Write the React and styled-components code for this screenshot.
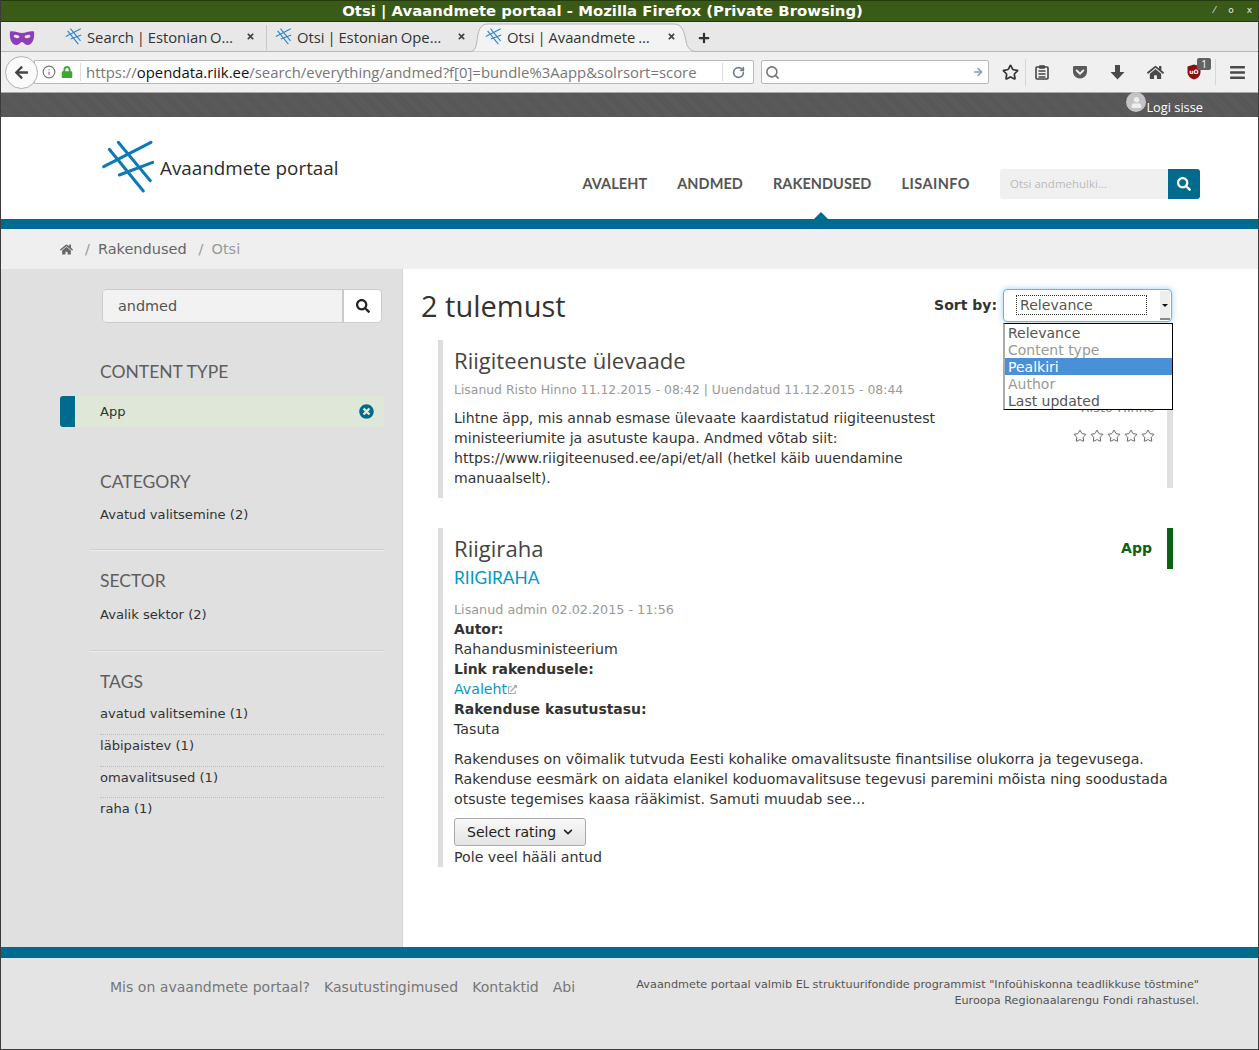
import styled, { createGlobalStyle } from 'styled-components';
import { FaHome, FaSearch, FaTimesCircle, FaLock, FaArrowLeft, FaBars, FaGetPocket, FaTimes, FaPlus, FaChevronDown, FaUser, FaExternalLinkAlt } from 'react-icons/fa';
import { Info, RotateCw, Star, ArrowRight, Search } from 'lucide-react';

const GlobalStyle = createGlobalStyle`
	html, body {
		margin: 0;
		padding: 0;
		background: #fff;
	}
	body {
		font-family: "DejaVu Sans", sans-serif;
		font-size: 14.1px;
		line-height: 20px;
		color: #333;
	}
	* {
		box-sizing: border-box;
	}
`;

const Window = styled.div`
	width: 1259px;
	height: 1050px;
	display: flex;
	flex-direction: column;
	overflow: hidden;
	border-left: 1px solid #3c3c3c;
	border-right: 1px solid #3c3c3c;
	border-bottom: 1px solid #3c3c3c;
`;

const TitleBar = styled.div`
	height: 22px;
	flex: none;
	margin: 0 -1px;
	padding-right: 54px;
	background: #3a5a17;
	border: 1px solid #233a0a;
	color: #fff;
	font-weight: bold;
	font-size: 14.85px;
	line-height: 19px;
	display: flex;
	align-items: center;
	justify-content: center;
	position: relative;
`;

const WindowButtons = styled.div`
	position: absolute;
	right: 6px;
	top: 0;
	display: flex;
	gap: 13px;
	font-size: 9px;
	font-weight: normal;
	color: #e6e6e6;
`;

const TabBar = styled.div`
	height: 30px;
	flex: none;
	background: #e8e8e8;
	border-bottom: 1px solid #b5b5b5;
	display: flex;
	align-items: center;
	font-family: "Open Sans", sans-serif;
	font-size: 14.8px;
	word-spacing: -1px;
	color: #333;
	padding: 2px 0 0 8px;
`;

const Tab = styled.div`
	width: 210px;
	height: 25px;
	display: flex;
	align-items: center;
	padding: 0 8px 2px;
	gap: 5px;
	position: relative;
	border-right: ${(p) => (p.$divider ? '1px solid #c8c8c8' : 'none')};
	> span,
	> svg {
		position: relative;
		z-index: 1;
	}
`;

const TabShape = styled.svg`
	position: absolute !important;
	z-index: 0 !important;
	left: -8px;
	top: -2px;
`;

const TabTitle = styled.span`
	flex: 1;
	white-space: nowrap;
	overflow: hidden;
`;

const TabClose = styled(FaTimes)`
	font-size: 9px;
	color: #444;
	margin-right: 3px;
`;

const NewTab = styled(FaPlus)`
	font-size: 12px;
	color: #333;
	margin-left: 11px;
	position: relative;
`;

const NavBar = styled.div`
	height: 41px;
	flex: none;
	background: #f0f0f0;
	border-bottom: 1px solid #a9a9a9;
	display: flex;
	align-items: center;
	padding-left: 4px;
`;

const BackButton = styled.div`
	width: 33px;
	height: 33px;
	flex: none;
	border-radius: 50%;
	background: #fafafa;
	border: 1px solid #b0b0b0;
	display: flex;
	align-items: center;
	justify-content: center;
	color: #444;
	font-size: 15px;
	position: relative;
	z-index: 1;
`;

const UrlBox = styled.div`
	width: 720px;
	height: 24px;
	margin-left: -4px;
	background: #fff;
	border: 1px solid #b9b9b9;
	border-radius: 0 2px 2px 0;
	display: flex;
	align-items: center;
	padding-left: 7px;
	font-family: "Open Sans", sans-serif;
	font-size: 14.9px;
	color: #777;
	white-space: nowrap;
`;

const UrlDivider = styled.span`
	width: 1px;
	height: 18px;
	background: #ddd;
	margin: 0 5px 0 7px;
	flex: none;
`;

const UrlText = styled.span`
	flex: 1;
	overflow: hidden;
	b {
		font-weight: normal;
		color: #111;
	}
`;

const SearchBox = styled.div`
	width: 228px;
	height: 24px;
	margin-left: 7px;
	background: #fff;
	border: 1px solid #b9b9b9;
	border-radius: 2px;
	display: flex;
	align-items: center;
	justify-content: space-between;
	padding: 0 4px 0 3px;
	color: #777;
`;

const ToolIcons = styled.div`
	flex: 1;
	display: flex;
	align-items: center;
	color: #4a4a4a;
	font-size: 16px;
	padding-left: 13px;
`;

const ToolIcon = styled.span`
	width: ${(p) => p.$w}px;
	flex: none;
	display: flex;
	align-items: center;
	position: relative;
	${(p) =>
		p.$dividerRight
			? `&::after {
		content: '';
		position: absolute;
		right: ${p.$dividerRight}px;
		top: -5px;
		bottom: -5px;
		width: 1px;
		background: #d6d6d6;
	}`
			: ''}
`;

const Badge = styled.span`
	position: absolute;
	left: 10px;
	top: -6px;
	width: 14px;
	height: 12px;
	background: #5f6368;
	border-radius: 2px;
	color: #fff;
	font-family: "Open Sans", sans-serif;
	font-size: 10px;
	line-height: 12px;
	text-align: center;
`;

const TopStrip = styled.div`
	height: 24px;
	flex: none;
	background-color: #5a5a5a;
	background-image: repeating-linear-gradient(45deg, #555 0 1px, #5c5c5c 1px 2px);
	display: flex;
	justify-content: flex-end;
	padding-right: 55px;
	color: #fff;
	font-size: 12.8px;
	font-family: "Open Sans", sans-serif;
`;

const Login = styled.div`
	display: flex;
	align-items: flex-end;
	line-height: 17px;
	height: 24px;
	padding-bottom: 1px;
`;

const Avatar = styled.span`
	width: 20px;
	height: 20px;
	border-radius: 50%;
	background: #c4c4c4;
	color: #eee;
	display: flex;
	align-items: center;
	justify-content: center;
	font-size: 11px;
	margin-bottom: 4px;
`;

const Header = styled.header`
	height: 102px;
	flex: none;
	background: #fff;
	display: flex;
	padding: 23px 58px 0 100px;
`;

const Logo = styled.div`
	display: flex;
	align-items: center;
	height: 54px;
	gap: 5px;
	font-family: "Open Sans", sans-serif;
	font-size: 18.85px;
	color: #2b2b2b;
`;

const LogoText = styled.span`
	margin-top: 2px;
`;

const MainNav = styled.nav`
	margin-left: auto;
	display: flex;
	align-items: flex-start;
	padding-top: 34px;
	gap: 30px;
	font-family: "Lato", sans-serif;
	font-weight: bold;
	font-size: 14.5px;
	letter-spacing: 0.06px;
	color: #555;
`;

const NavItem = styled.a`
	line-height: 20px;
	position: relative;
	letter-spacing: ${(p) => p.$spacing || 0.06}px;
`;

const ActiveCaret = styled.span`
	position: absolute;
	left: 50%;
	margin-left: -8px;
	top: 38px;
	border-left: 7px solid transparent;
	border-right: 7px solid transparent;
	border-bottom: 7px solid #006b8f;
`;

const HeaderSearch = styled.div`
	margin-left: 30px;
	margin-top: 29px;
	display: flex;
	height: 30px;
`;

const HeaderInput = styled.div`
	width: 168px;
	background: #f0f0f0;
	border-radius: 3px 0 0 3px;
	color: #bbb;
	font-size: 11.5px;
	line-height: 30px;
	padding-left: 10px;
	font-family: "Open Sans", sans-serif;
`;

const HeaderButton = styled.div`
	width: 32px;
	background: #006b8f;
	color: #fff;
	border-radius: 0 3px 3px 0;
	display: flex;
	align-items: center;
	justify-content: center;
	font-size: 14px;
`;

const TealBar = styled.div`
	height: ${(p) => p.$h}px;
	flex: none;
	background: #006b8f;
`;

const Breadcrumb = styled.div`
	height: 40px;
	flex: none;
	background: #efefef;
	display: flex;
	align-items: center;
	padding-left: 59px;
	color: #666;
	font-size: 14.5px;
`;

const Crumb = styled.span`
	color: ${(p) => (p.$muted ? '#999' : '#666')};
	margin-left: ${(p) => p.$ml || 0}px;
`;

const Body = styled.div`
	flex: 1;
	display: grid;
	grid-template-columns: 402px 1fr;
	position: relative;
`;

const Sidebar = styled.aside`
	background: #e0e0e0;
	border-right: 1px solid #d4d4d4;
	padding: 20px 0 0 59px;
	font-size: 13.1px;
`;

const SideSearch = styled.div`
	display: flex;
	width: 280px;
	height: 34px;
	margin-left: 42px;
	border: 1px solid #ccc;
	border-radius: 5px;
	overflow: hidden;
`;

const SideInput = styled.div`
	flex: 1;
	background: #f2f2f2;
	line-height: 32px;
	padding-left: 15px;
	font-size: 14.4px;
	color: #555;
`;

const SideButton = styled.div`
	width: 39px;
	background: #fff;
	border-left: 2px solid #ccc;
	display: flex;
	align-items: center;
	justify-content: center;
	font-size: 14px;
	color: #222;
`;

const FacetTitle = styled.h3`
	margin: ${(p) => p.$mt}px 0 0 40px;
	font-family: "Lato", sans-serif;
	font-size: 17.5px;
	line-height: 20px;
	font-weight: normal;
	color: #5e5e5e;
`;

const ActiveFacet = styled.div`
	margin-top: 14px;
	width: 324px;
	height: 31px;
	display: flex;
	align-items: center;
	background: #dfe8d8;
	border-left: 15px solid #006b8f;
	border-radius: 3px 0 0 3px;
	padding: 0 10px 0 25px;
	justify-content: space-between;
	color: #333;
`;

const RemoveIcon = styled(FaTimesCircle)`
	color: #006b8f;
	font-size: 15px;
`;

const FacetList = styled.ul`
	list-style: none;
	margin: ${(p) => p.$mt || 12}px 0 0 40px;
	padding: 0;
	width: 284px;
`;

const FacetItem = styled.li`
	height: ${(p) => p.$h || 32}px;
	line-height: 20px;
	padding-top: 1px;
	border-bottom: ${(p) => (p.$line ? '1px dotted #bdbdbd' : 'none')};
`;

const FacetDivider = styled.div`
	width: 294px;
	height: 2px;
	margin: ${(p) => p.$mt}px 0 0 30px;
	background: #d0d0d0;
	border-bottom: 1px solid #ececec;
`;

const Content = styled.main`
	background: #fff;
	padding: 16px 86px 0 18px;
	position: relative;
`;

const ContentHead = styled.div`
	display: flex;
	align-items: flex-start;
	height: 55px;
`;

const ResultCount = styled.h1`
	margin: 0;
	font-family: "Open Sans", sans-serif;
	font-weight: normal;
	font-size: 29px;
	line-height: 41px;
	color: #333;
`;

const SortLabel = styled.b`
	margin-left: auto;
	margin-top: 10px;
	font-size: 14px;
`;

const SortSelect = styled.div`
	position: relative;
	width: 169px;
	height: 33px;
	margin: 4px 0 0 6px;
	background: #fff;
	border: 1px solid #66afe9;
	border-radius: 4px;
	box-shadow: 0 0 6px rgba(102, 175, 233, 0.6);
	padding: 5px 12px;
`;

const SortValue = styled.div`
	width: 131px;
	height: 20px;
	border: 1px dotted #333;
	line-height: 18px;
	padding-left: 3px;
	color: #555;
`;

const SortArrow = styled.span`
	position: absolute;
	right: 1px;
	top: 1px;
	bottom: 1px;
	width: 10px;
	background: #eee;
	border-bottom: 2px solid #888;
	&::after {
		content: '';
		position: absolute;
		left: 2px;
		top: 13px;
		border-left: 3px solid transparent;
		border-right: 3px solid transparent;
		border-top: 3px solid #111;
	}
`;

const SortMenu = styled.ul`
	position: absolute;
	left: -1px;
	top: 33px;
	width: 170px;
	margin: 0;
	padding: 0;
	list-style: none;
	background: #fff;
	border: 1px solid #000;
	border-left: 2px solid #aaa;
	z-index: 5;
	font-size: 14px;
	line-height: 18px;
`;

const SortOption = styled.li`
	height: 17px;
	padding-left: 3px;
	color: ${(p) => (p.$selected ? '#fff' : p.$muted ? '#999' : '#555')};
	background: ${(p) => (p.$selected ? '#4a90d9' : 'transparent')};
`;

const Result = styled.article`
	margin: ${(p) => p.$mt || 0}px -1px 0 17px;
	border-left: 5px solid #ddd;
	padding-left: 11px;
	display: flex;
	height: ${(p) => p.$h}px;
	position: relative;
	font-size: ${(p) => p.$size || 14.1}px;
`;

const ResultMain = styled.div`
	flex: 1;
	min-width: 0;
`;

const ResultTitle = styled.h2`
	margin: 0;
	padding-top: 6px;
	font-family: "Open Sans", sans-serif;
	font-weight: normal;
	font-size: 22.1px;
	line-height: 28px;
	color: #444;
`;

const ResultSub = styled.a`
	display: block;
	font-family: "Lato", sans-serif;
	font-size: 17.3px;
	line-height: 24px;
	color: #0099c6;
	margin-top: 4px;
`;

const Meta = styled.div`
	color: #999;
	font-size: ${(p) => p.$size}px;
	line-height: 20px;
	margin-top: ${(p) => p.$mt}px;
	margin-bottom: ${(p) => p.$mb || 0}px;
`;

const Paragraph = styled.p`
	margin: ${(p) => p.$mt || 0}px 0 0;
	width: ${(p) => p.$w || 'auto'};
`;

const FieldLabel = styled.b`
	font-size: 13.95px;
`;

const LinkText = styled.a`
	color: #0099c6;
	display: inline-flex;
	align-items: center;
	gap: 1px;
`;

const RatingButton = styled.button`
	display: flex;
	align-items: center;
	gap: 7px;
	margin: 9px 0 1px;
	height: 28px;
	padding: 0 12px;
	border: 1px solid #aaa;
	border-radius: 3px;
	background: linear-gradient(#f8f8f8, #e4e4e4);
	font-family: "DejaVu Sans", sans-serif;
	font-size: 14px;
	color: #222;
`;

const ResultAside = styled.div`
	width: 160px;
	flex: none;
	height: 148px;
	border-right: 6px solid #e0e0e0;
	display: flex;
	flex-direction: column;
	align-items: flex-end;
	padding-right: 12px;
`;

const TypeFlag = styled.div`
	position: absolute;
	right: 0;
	top: 0;
	height: 41px;
	border-right: 6px solid #0b6212;
	padding-right: 15px;
`;

const AppTag = styled.b`
	display: block;
	color: #0b6212;
	font-size: 14px;
	margin-top: 10px;
`;

const AuthorName = styled.span`
	color: #888;
	font-size: 13px;
	margin-top: 28px;
`;

const Stars = styled.div`
	display: flex;
	gap: 3px;
	margin-top: 11px;
	color: #444;
`;

const Footer = styled.footer`
	flex: none;
	height: 91px;
	background: #e4e4e4;
	display: flex;
	justify-content: space-between;
	padding: 19px 59px 0 109px;
`;

const FooterLinks = styled.div`
	display: flex;
	gap: 14px;
	color: #777;
	font-size: 14.05px;
	line-height: 20px;
`;

const FooterNote = styled.div`
	text-align: right;
	font-size: 11.24px;
	line-height: 16px;
	color: #555;
`;

const TabLogo = () => (
	<svg width="17" height="17" viewBox="0 0 54 54" fill="none" stroke="#2f88c8" strokeWidth="3.6" style={{ flex: 'none' }}>
		<path d="M2.7 26.7 50 2.3M18.3 35l33.4-12.7M8.3 9.3l34 41.7M17.3 2.3l32 38.4" />
	</svg>
);

const sortOptions = ['Relevance', 'Content type', 'Pealkiri', 'Author', 'Last updated'];

export default function App() {
	return (
		<>
			<GlobalStyle />
			<Window>
				<TitleBar>
					Otsi | Avaandmete portaal - Mozilla Firefox (Private Browsing)
					<WindowButtons>
						<span>⁄</span>
						<span>o</span>
						<span>x</span>
					</WindowButtons>
				</TitleBar>
				<TabBar>
					<svg width="26" height="16" viewBox="0 0 26 16" style={{ marginRight: 22, flex: 'none' }}>
						<path d="M1 1.5c4-1 8 1.500 12 1.500s8-2.500 12-1.500c.8 6-1 13.500-6.500 13.500-3 0-3.500-3-5.500-3s-2.500 3-5.500 3C2 15 .2 7.500 1 1.500z" fill="#8d3db6" />
						<ellipse cx="7.500" cy="6.500" rx="3" ry="1.600" fill="#e8e8e8" transform="rotate(12 7.500 6.500)" />
						<ellipse cx="18.500" cy="6.500" rx="3" ry="1.600" fill="#e8e8e8" transform="rotate(-12 18.500 6.500)" />
					</svg>
					<Tab $divider>
						<TabLogo />
						<TabTitle>Search | Estonian O…</TabTitle>
						<TabClose />
					</Tab>
					<Tab>
						<TabLogo />
						<TabTitle>Otsi | Estonian Ope…</TabTitle>
						<TabClose />
					</Tab>
					<Tab>
						<TabShape width="228" height="29" viewBox="0 0 228 29">
							<path d="M1 28.500C6 28.500 7 24 8 18 9 8 11 1 19 1L205 1C213 1 215 8 217 18 218 25 222 28.500 227 28.500" fill="#f3f3f3" stroke="#b5b5b5" />
						</TabShape>
						<TabLogo />
						<TabTitle>Otsi | Avaandmete …</TabTitle>
						<TabClose />
					</Tab>
					<NewTab />
				</TabBar>
				<NavBar>
					<BackButton>
						<FaArrowLeft />
					</BackButton>
					<UrlBox>
						<Info size={14} color="#777" style={{ marginRight: 5, flex: 'none' }} />
						<FaLock size={12} color="#3fa535" style={{ flex: 'none' }} />
						<UrlDivider />
						<UrlText>
							https://<b>opendata.riik.ee</b>/search/everything/andmed?f[0]=bundle%3Aapp&solrsort=score
						</UrlText>
						<UrlDivider />
						<RotateCw size={13} color="#6d7f8f" strokeWidth={3} style={{ margin: '0 8px 0 4px', flex: 'none' }} />
					</UrlBox>
					<SearchBox>
						<Search size={15} strokeWidth={2.5} />
						<ArrowRight size={12} color="#8a9aa8" strokeWidth={3} />
					</SearchBox>
					<ToolIcons>
						<ToolIcon $w={33} $dividerRight={9}>
							<Star size={17} strokeWidth={2.4} color="#333" />
						</ToolIcon>
						<ToolIcon $w={37}>
							<svg width="14" height="16" viewBox="0 0 14 16" fill="none" stroke="#444" strokeWidth="1.600">
								<rect x="1" y="3" width="12" height="12" rx="1" />
								<path d="M5 2h4v2H5zM3.500 7h7M3.500 10h7M3.500 13h7" />
							</svg>
						</ToolIcon>
						<ToolIcon $w={38}>
							<FaGetPocket size={16} color="#5a5a5a" />
						</ToolIcon>
						<ToolIcon $w={37}>
							<svg width="15" height="16" viewBox="0 0 15 16" fill="#4a4a4a">
								<path d="M5 1h5v7h4.500L7.500 15.500.5 8H5z" />
							</svg>
						</ToolIcon>
						<ToolIcon $w={40}>
							<FaHome size={17} />
						</ToolIcon>
						<ToolIcon $w={42} $dividerRight={13}>
							<svg width="14" height="16" viewBox="0 0 14 16">
								<path d="M7 .5l6.500 2v5.500c0 4-3 6.500-6.500 7.500C3.500 14.500.5 12 .5 8V2.500z" fill="#8a0f0f" />
								<text x="7" y="10" textAnchor="middle" fontSize="6" fontWeight="bold" fill="#fff" fontFamily="DejaVu Sans">uO</text>
							</svg>
							<Badge>1</Badge>
						</ToolIcon>
						<ToolIcon $w={20}>
							<FaBars size={17} />
						</ToolIcon>
					</ToolIcons>
				</NavBar>
				<TopStrip>
					<Login>
						<Avatar>
							<FaUser />
						</Avatar>
						Logi sisse
					</Login>
				</TopStrip>
				<Header>
					<Logo>
						<svg width="54" height="54" viewBox="0 0 54 54" fill="none" stroke="#0b7ab5" strokeWidth="3" strokeLinecap="round">
							<path d="M2.700 26.700 50 2.300M18.300 35l33.400-12.700M8.300 9.300l34 41.700M17.300 2.300l32 38.400" />
						</svg>
						<LogoText>Avaandmete portaal</LogoText>
					</Logo>
					<MainNav>
						<NavItem>AVALEHT</NavItem>
						<NavItem>ANDMED</NavItem>
						<NavItem>
							RAKENDUSED
							<ActiveCaret />
						</NavItem>
						<NavItem $spacing={0.45}>LISAINFO</NavItem>
					</MainNav>
					<HeaderSearch>
						<HeaderInput>Otsi andmehulki...</HeaderInput>
						<HeaderButton>
							<FaSearch />
						</HeaderButton>
					</HeaderSearch>
				</Header>
				<TealBar $h={10} />
				<Breadcrumb>
					<FaHome size={13} />
					<Crumb $ml={12} $muted>/</Crumb>
					<Crumb $ml={8}>Rakendused</Crumb>
					<Crumb $ml={12} $muted>/</Crumb>
					<Crumb $ml={8} $muted>Otsi</Crumb>
				</Breadcrumb>
				<Body>
					<Sidebar>
						<SideSearch>
							<SideInput>andmed</SideInput>
							<SideButton>
								<FaSearch />
							</SideButton>
						</SideSearch>
						<FacetTitle $mt={39}>CONTENT TYPE</FacetTitle>
						<ActiveFacet>
							App
							<RemoveIcon />
						</ActiveFacet>
						<FacetTitle $mt={45}>CATEGORY</FacetTitle>
						<FacetList>
							<FacetItem $h={24}>Avatud valitsemine (2)</FacetItem>
						</FacetList>
						<FacetDivider $mt={21} />
						<FacetTitle $mt={20}>SECTOR</FacetTitle>
						<FacetList $mt={13}>
							<FacetItem $h={24}>Avalik sektor (2)</FacetItem>
						</FacetList>
						<FacetDivider $mt={22} />
						<FacetTitle $mt={20}>TAGS</FacetTitle>
						<FacetList $mt={11}>
							<FacetItem $line>avatud valitsemine (1)</FacetItem>
							<FacetItem $line>läbipaistev (1)</FacetItem>
							<FacetItem $line $h={31}>omavalitsused (1)</FacetItem>
							<FacetItem>raha (1)</FacetItem>
						</FacetList>
					</Sidebar>
					<Content>
						<ContentHead>
							<ResultCount>2 tulemust</ResultCount>
							<SortLabel>Sort by:</SortLabel>
							<SortSelect>
								<SortValue>Relevance</SortValue>
								<SortArrow />
								<SortMenu>
									{sortOptions.map((r) => (
										<SortOption key={r} $selected={r === 'Pealkiri'} $muted={r === 'Content type' || r === 'Author'}>
											{r}
										</SortOption>
									))}
								</SortMenu>
							</SortSelect>
						</ContentHead>
						<Result $h={158}>
							<ResultMain>
								<ResultTitle>Riigiteenuste ülevaade</ResultTitle>
								<Meta $mt={6} $size={12.4}>Lisanud Risto Hinno 11.12.2015 - 08:42 | Uuendatud 11.12.2015 - 08:44</Meta>
								<Paragraph $mt={8} $w="490px">
									Lihtne äpp, mis annab esmase ülevaate kaardistatud riigiteenustest ministeeriumite ja asutuste kaupa. Andmed võtab siit: https://www.riigiteenused.ee/api/et/all (hetkel käib uuendamine manuaalselt).
								</Paragraph>
							</ResultMain>
							<ResultAside>
								<AppTag>App</AppTag>
								<AuthorName>Risto Hinno</AuthorName>
								<Stars>
									{[0, 1, 2, 3, 4].map((i) => (
										<Star key={i} size={14} strokeWidth={1.4} />
									))}
								</Stars>
							</ResultAside>
						</Result>
						<Result $mt={30} $h={339} $size={14.18}>
							<ResultMain>
								<ResultTitle>Riigiraha</ResultTitle>
								<ResultSub>RIIGIRAHA</ResultSub>
								<Meta $mt={10} $mb={-1} $size={12.75}>Lisanud admin 02.02.2015 - 11:56</Meta>
								<FieldLabel>Autor:</FieldLabel>
								<div>Rahandusministeerium</div>
								<FieldLabel>Link rakendusele:</FieldLabel>
								<div>
									<LinkText>
										Avaleht
										<FaExternalLinkAlt size={9} color="#aaa" />
									</LinkText>
								</div>
								<FieldLabel>Rakenduse kasutustasu:</FieldLabel>
								<div>Tasuta</div>
								<Paragraph $mt={10}>
									Rakenduses on võimalik tutvuda Eesti kohalike omavalitsuste finantsilise olukorra ja tegevusega. Rakenduse eesmärk on aidata elanikel koduomavalitsuse tegevusi paremini mõista ning soodustada otsuste tegemises kaasa rääkimist. Samuti muudab see...
								</Paragraph>
								<RatingButton>
									Select rating
									<FaChevronDown size={10} />
								</RatingButton>
								<div>Pole veel hääli antud</div>
							</ResultMain>
							<TypeFlag>
								<AppTag>App</AppTag>
							</TypeFlag>
						</Result>
					</Content>
				</Body>
				<TealBar $h={11} />
				<Footer>
					<FooterLinks>
						<span>Mis on avaandmete portaal?</span>
						<span>Kasutustingimused</span>
						<span>Kontaktid</span>
						<span>Abi</span>
					</FooterLinks>
					<FooterNote>
						Avaandmete portaal valmib EL struktuurifondide programmist "Infoühiskonna teadlikkuse tõstmine"
						<br />
						Euroopa Regionaalarengu Fondi rahastusel.
					</FooterNote>
				</Footer>
			</Window>
		</>
	);
}
